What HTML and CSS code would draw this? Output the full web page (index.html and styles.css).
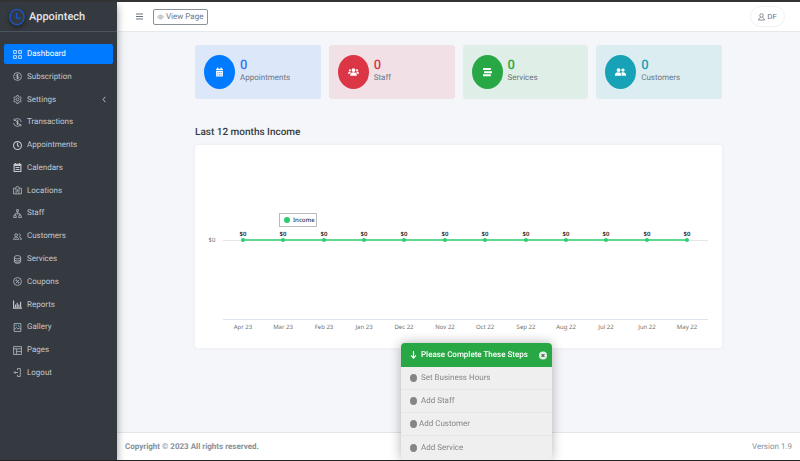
FILE: index.html
```html
<!DOCTYPE html>
<html lang="en">
<head>
    <meta charset="UTF-8">
    <meta name="viewport" content="width=device-width, initial-scale=1.0">
    <title>Appointech</title>
    <link rel="stylesheet" href="styles.css">
</head>
<body>
    <aside class="sidebar">
        <a href="#" class="brand">
            <svg class="brand-logo" viewBox="0 0 17 18"><ellipse cx="8.5" cy="9" rx="7.6" ry="8.1"/><path d="M8 4.5v5.7h4.6"/></svg>
            <span>Appointech</span>
        </a>
        <nav class="menu">
            <a href="#" class="menu-link active">
                <svg class="icon" viewBox="0 0 16 16"><path d="M1 1h5v5H1zM10 1h5v5h-5zM1 10h5v5H1zM10 10h5v5h-5z"/></svg>
                Dashboard
            </a>
            <a href="#" class="menu-link">
                <svg class="icon" viewBox="0 0 16 16"><circle cx="8" cy="8" r="7"/><path d="M10.5 6C10 4.900 9 4.700 8 4.700c-3.200 0-3.200 3 0 3.300s3.300 3.400 0 3.400c-1.300 0-2.300-.4-2.600-1.600M8 3v10"/></svg>
                Subscription
            </a>
            <a href="#" class="menu-link">
                <svg class="icon" viewBox="0 0 16 16"><circle cx="8" cy="8" r="2.500"/><path d="M6.700 1h2.600l.5 2 1.500.8 2-.6 1.400 2.300L13.200 7v2l1.500 1.500-1.400 2.300-2-.6-1.500.8-.5 2H6.700l-.5-2-1.500-.8-2 .6-1.400-2.300L2.800 9V7L1.300 5.500l1.400-2.300 2 .6L6.200 3z"/></svg>
                Settings
                <svg class="chevron" viewBox="0 0 6 10"><path d="M5 1 1.500 5 5 9"/></svg>
            </a>
            <a href="#" class="menu-link">
                <svg class="icon" viewBox="0 0 16 16"><path d="M2 4.500A7 7 0 0 1 14.900 7M1.100 9A7 7 0 0 0 14 11.500M2 1v3.500h3.500M14 15v-3.500h-3.500M10 6c-.7-1.300-3.800-1.200-3.800.4C6.200 8.500 10 7.500 10 9.600c0 1.600-3.300 1.700-4 .2M8 4v8"/></svg>
                Transactions
            </a>
            <a href="#" class="menu-link">
                <svg class="icon bold" viewBox="0 0 16 16"><circle cx="8" cy="8" r="7"/><path d="M8 3.500V8l3 2.500"/></svg>
                Appointments
            </a>
            <a href="#" class="menu-link">
                <svg class="icon bold" viewBox="0 0 16 16"><path d="M2 2.500h12V15H2zM2 4.500h12M4.500 0v3M11.500 0v3M4.500 8h7M4.500 11.500h7"/></svg>
                Calendars
            </a>
            <a href="#" class="menu-link">
                <svg class="icon" viewBox="0 0 16 16"><path d="M5 4H1v10h14V4h-4M5.500 7v7M10.500 7v7M8 10V6M5.200 7V3.500a2.800 2.800 0 0 1 5.600 0V7"/></svg>
                Locations
            </a>
            <a href="#" class="menu-link">
                <svg class="icon" viewBox="0 0 16 16"><path d="M8 5v3M3.500 11V8.500h9V11M6.500 1h3v4h-3zM2 11h3l1 4H1zM11 11h3l1 4h-5z"/></svg>
                Staff
            </a>
            <a href="#" class="menu-link">
                <svg class="icon" viewBox="0 0 16 16"><circle cx="5.500" cy="5.500" r="2.500"/><path d="M1 13c0-5 9-5 9 0zM10 4c3.500-1.500 4.500 3.500 1.200 4.200M11.500 9.500c2.500.3 3.500 1.500 3.500 3.500h-3"/></svg>
                Customers
            </a>
            <a href="#" class="menu-link">
                <svg class="icon" viewBox="0 0 16 16"><ellipse cx="8" cy="4" rx="5.500" ry="3"/><path d="M2.500 4v8c0 4 11 4 11 0V4M2.500 7.500c0 4 11 4 11 0M2.500 10c0 4 11 4 11 0"/></svg>
                Services
            </a>
            <a href="#" class="menu-link">
                <svg class="icon" viewBox="0 0 16 16"><circle cx="8" cy="8" r="7"/><circle cx="6" cy="6" r="1"/><circle cx="10" cy="10" r="1"/><path d="m5 11 6-6"/></svg>
                Coupons
            </a>
            <a href="#" class="menu-link">
                <svg class="icon bold" viewBox="0 0 16 16"><path d="M1 1v13.500h15M4.500 13V8M7.500 13V5M10.500 13V8M13.500 13V3"/></svg>
                Reports
            </a>
            <a href="#" class="menu-link">
                <svg class="icon" viewBox="0 0 16 16"><path d="M2 1h12v14H2zM2 12l4-4 3 3 2-2 3 2"/><path class="mark" d="M4 4h3M10 3.500v3h2"/></svg>
                Gallery
            </a>
            <a href="#" class="menu-link">
                <svg class="icon" viewBox="0 0 16 16"><path d="M1 1h14v14H1zM1 5h14M6 5v10M6 10h9"/></svg>
                Pages
            </a>
            <a href="#" class="menu-link">
                <svg class="icon" viewBox="0 0 16 16"><path d="M8 4V1h5v14H8v-3M9 8H2M4.500 5.500 2 8l2.500 2.500"/></svg>
                Logout
            </a>
        </nav>
    </aside>

    <div class="page">
        <header class="topbar">
            <button class="menu-toggle" aria-label="Toggle menu">
                <svg viewBox="0 0 7 7"><path d="M0 1h7M0 3.500h7M0 6h7"/></svg>
            </button>
            <a href="#" class="view-page">
                <svg viewBox="0 0 14 10"><path d="M1 5c3-5 9-5 12 0-3 5-9 5-12 0z"/><circle cx="7" cy="5" r="2"/></svg>
                View Page
            </a>
            <button class="user">
                <svg viewBox="0 0 14 16"><circle cx="7" cy="5" r="3.500"/><path d="M5 8.500c0 2-4 1.500-4 5.500h12c0-4-4-3.500-4-5.500"/></svg>
                DF
            </button>
        </header>

        <main class="content">
            <section class="stats">
                <div class="stat appointments">
                    <span class="stat-icon"><svg viewBox="0 0 16 16"><path d="M2 2h2V0h2v2h4V0h2v2h2v3H2zM2 6h12v10H2z"/><path class="cut" d="M4 8h2v2H4zM7 8h2v2H7zM10 8h2v2h-2zM4 12h2v2H4zM7 12h2v2H7zM10 12h2v2h-2z"/></svg></span>
                    <div>
                        <p class="stat-value">0</p>
                        <p class="stat-label">Appointments</p>
                    </div>
                </div>
                <div class="stat staff">
                    <span class="stat-icon wide"><svg viewBox="0 0 20 16"><circle cx="10" cy="4.500" r="3.500"/><circle cx="3.500" cy="5" r="2"/><circle cx="16.500" cy="5" r="2"/><path d="M4 15v-3c0-5 12-5 12 0v3zM0 11c0-4 3-4 5-3l-2 3zM20 11c0-4-3-4-5-3l2 3z"/></svg></span>
                    <div>
                        <p class="stat-value">0</p>
                        <p class="stat-label">Staff</p>
                    </div>
                </div>
                <div class="stat services">
                    <span class="stat-icon"><svg viewBox="0 0 16 16"><path d="M0 1h14v3.500H0zM2 6.500h14V10H2zM0 12h14v3.500H0z"/></svg></span>
                    <div>
                        <p class="stat-value">0</p>
                        <p class="stat-label">Services</p>
                    </div>
                </div>
                <div class="stat customers">
                    <span class="stat-icon wide"><svg viewBox="0 0 20 16"><circle cx="6.500" cy="4.500" r="3.500"/><circle cx="14.500" cy="4.500" r="3"/><path d="M0 15v-2c0-6 11-6 12 0v2zM13 15c.3-2.500-.5-4-2-5.500 4-2 9-.5 9 3.500v2z"/></svg></span>
                    <div>
                        <p class="stat-value">0</p>
                        <p class="stat-label">Customers</p>
                    </div>
                </div>
            </section>

            <h2 class="section-title">Last 12 months Income</h2>
            <section class="chart-card">
                <svg class="chart" id="income-chart" viewBox="0 0 527 203" role="img" aria-label="Income for the last 12 months">
                    <path class="grid-line" d="M28 95.500h485"/>
                    <path class="axis-line" d="M28 174.500h485"/>
                    <path class="series" d="M48 95h444"/>
                    <text class="axis-label" x="17" y="97">$0</text>
                    <g id="points"></g>
                    <rect class="legend-box" x="84.500" y="68.500" width="37" height="13"/>
                    <circle class="dot" cx="92" cy="75" r="3"/>
                    <text class="legend-text" x="98" y="77">Income</text>
                </svg>
            </section>
        </main>

        <footer class="footer">
            <strong>Copyright © 2023 All rights reserved.</strong>
            <span>Version 1.9</span>
        </footer>
    </div>

    <div class="steps">
        <div class="steps-header">
            <svg class="arrow" viewBox="0 0 8 10"><path d="M4 0v9M1 5.500 4 9l3-3.500"/></svg>
            <span>Please Complete These Steps</span>
            <button class="steps-close" aria-label="Close">
                <svg viewBox="0 0 10 10"><circle cx="5" cy="5" r="5"/><path d="m3.200 3.200 3.600 3.600M6.800 3.200 3.200 6.800"/></svg>
            </button>
        </div>
        <a href="#" class="step">Set Business Hours</a>
        <a href="#" class="step">Add Staff</a>
        <a href="#" class="step tight">Add Customer</a>
        <a href="#" class="step">Add Service</a>
    </div>

    <script>
        const months = ['Apr 23', 'Mar 23', 'Feb 23', 'Jan 23', 'Dec 22', 'Nov 22', 'Oct 22', 'Sep 22', 'Aug 22', 'Jul 22', 'Jun 22', 'May 22'];
        const points = document.getElementById('points');

        months.forEach((month, i) => {
            const x = Math.round(48 + i * 444 / 11);
            points.innerHTML += `
                <circle class="dot" cx="${x}" cy="95" r="2"/>
                <text class="value-label" x="${x}" y="91">$0</text>
                <text class="axis-label" x="${x}" y="184">${month}</text>`;
        });
    </script>
</body>
</html>
```
FILE: styles.css
```css
* {
    box-sizing: border-box;
}

body {
    display: flex;
    min-height: 100vh;
    margin: 0;
    border-top: 2px solid #333;
    border-bottom: 1px solid #222;
    font-family: Roboto, Arial, sans-serif;
    font-size: 8px;
    line-height: 12px;
    text-rendering: geometricPrecision;
    color: #6c757d;
    background-color: #f4f6f9;
}

a {
    color: inherit;
    text-decoration: none;
}

button {
    padding: 0;
    border: none;
    background: none;
    font: inherit;
    color: inherit;
    cursor: pointer;
}

p {
    margin: 0;
}

svg {
    display: block;
    flex-shrink: 0;
    fill: none;
    stroke: currentColor;
}

/* Sidebar */
.sidebar {
    display: flex;
    flex-direction: column;
    flex: 0 0 117px;
    background-color: #343a40;
    color: #c2c7d0;
    box-shadow: 0 4px 8px rgba(0, 0, 0, 0.4);
    z-index: 2;
}

.brand {
    display: flex;
    align-items: center;
    gap: 4px;
    height: 30px;
    padding-left: 9px;
    border-bottom: 1px solid #4b545c;
    font-size: 11px;
    font-weight: 500;
    color: #e4e6e8;
}

.brand-logo {
    width: 16px;
    height: 18px;
    stroke: #1757c9;
    stroke-width: 1.5;
    border-radius: 50%;
    box-shadow: 0 2px 4px rgba(0, 0, 0, 0.4);
}

.menu {
    display: flex;
    flex-direction: column;
    flex: 1;
    justify-content: space-between;
    padding: 12px 4px 77px;
}

.menu-link {
    display: flex;
    align-items: center;
    gap: 5px;
    padding: 4px 7px 4px 9px;
    border-radius: 2px;
}

.menu-link.active {
    background-color: #007bff;
    color: #fff;
}

.icon {
    width: 9px;
    height: 9px;
    stroke-width: 1.3;
}

.icon.bold {
    stroke-width: 2;
}

.icon .mark {
    stroke: #5fb4e0;
}

.chevron {
    width: 4px;
    height: 7px;
    margin-left: auto;
    stroke-width: 1.4;
}

/* Page */
.page {
    display: flex;
    flex-direction: column;
    flex: 1;
    min-width: 0;
}

.topbar {
    display: flex;
    align-items: center;
    height: 30px;
    padding: 0 15px 0 19px;
    border-bottom: 1px solid #e6e9ec;
    background-color: #fff;
}

.menu-toggle svg {
    width: 7px;
    height: 7px;
}

.view-page {
    display: flex;
    align-items: center;
    gap: 2px;
    margin-left: 10px;
    padding: 1px 4px 1px 3px;
    border: 1px solid #8b9299;
    border-radius: 2px;
}

.view-page svg {
    width: 7px;
    height: 6px;
}

.user {
    display: flex;
    align-items: center;
    gap: 2px;
    height: 21px;
    margin-left: auto;
    padding: 0 7px;
    border: 1px solid #eff1f3;
    border-radius: 11px;
}

.user svg {
    width: 7px;
    height: 8px;
    stroke-width: 1.6;
}

.content {
    flex: 1;
    padding: 13px 78px;
}

.stats {
    display: grid;
    grid-template-columns: repeat(4, 1fr);
    gap: 8px;
}

.stat {
    display: flex;
    align-items: center;
    gap: 5px;
    height: 54px;
    padding: 0 9px;
    border-radius: 3px;
}

.stat-icon {
    display: flex;
    align-items: center;
    justify-content: center;
    width: 31px;
    height: 34px;
    border-radius: 50%;
    color: #fff;
}

.stat-icon svg {
    width: 9px;
    height: 10px;
    fill: currentColor;
    stroke: none;
}

.stat-icon.wide svg {
    width: 11px;
}

.stat-icon .cut {
    fill: #5aa9fb;
}

.stat-value {
    font-size: 13px;
    font-weight: 500;
}

.appointments {
    background-color: #dde7fa;
}

.appointments .stat-icon {
    background-color: #007bff;
}

.appointments .stat-value {
    color: #3577f3;
}

.staff {
    background-color: #f1e1e6;
}

.staff .stat-icon {
    background-color: #dc3545;
}

.staff .stat-value {
    color: #dc3545;
}

.services {
    background-color: #dfeee6;
}

.services .stat-icon {
    background-color: #28a745;
}

.services .stat-value {
    color: #28a745;
}

.customers {
    background-color: #dcedf2;
}

.customers .stat-icon {
    background-color: #17a2b8;
}

.customers .stat-value {
    color: #17a2b8;
}

.section-title {
    margin: 28px 0 6px;
    font-size: 10px;
    font-weight: 500;
    color: #343a40;
}

.chart-card {
    border-radius: 3px;
    background-color: #fff;
    box-shadow: 0 0 4px rgba(0, 0, 0, 0.05);
}

.chart {
    width: 100%;
    stroke: none;
    font-family: "Noto Sans", sans-serif;
    font-size: 6px;
}

.grid-line {
    stroke: #e6e6e6;
}

.axis-line {
    stroke: #dfe5f0;
}

.series {
    stroke: #5fd894;
    stroke-width: 2;
}

.dot {
    fill: #2ecc71;
}

.axis-label {
    fill: #707070;
    text-anchor: middle;
}

.value-label {
    fill: #222;
    font-weight: 600;
    text-anchor: middle;
}

.legend-box {
    fill: #fff;
    stroke: #bbb;
}

.legend-text {
    fill: #333;
    font-weight: 500;
}

.footer {
    display: flex;
    align-items: center;
    justify-content: space-between;
    height: 28px;
    padding: 0 8px;
    border-top: 1px solid #e3e6ea;
    background-color: #fff;
    color: #869099;
}

/* Setup steps popup */
.steps {
    position: fixed;
    left: 401px;
    bottom: 1px;
    width: 151px;
    padding-bottom: 1px;
    border-radius: 4px;
    overflow: hidden;
    background-color: #efefef;
    box-shadow: 0 0 12px rgba(0, 0, 0, 0.3);
    color: #868686;
    z-index: 3;
}

.steps-header {
    display: flex;
    align-items: center;
    gap: 4px;
    height: 24px;
    padding: 0 5px 0 9px;
    background-color: #28a745;
    color: #fff;
    font-weight: 500;
}

.arrow {
    width: 7px;
    height: 8px;
    stroke-width: 1.4;
}

.steps-close {
    margin-left: auto;
}

.steps-close svg {
    width: 8px;
    height: 9px;
    fill: #e4efe6;
    stroke: none;
}

.steps-close path {
    stroke: #45684d;
    stroke-width: 1.4;
}

.step {
    display: flex;
    align-items: center;
    gap: 4px;
    height: 23px;
    padding-left: 9px;
    border-bottom: 1px solid #e6e6e6;
}

.step::before {
    content: "";
    width: 7px;
    height: 8px;
    border-radius: 50%;
    background-color: #858585;
}

.step.tight {
    gap: 2px;
}

.step:last-child {
    border-bottom: none;
}
```
